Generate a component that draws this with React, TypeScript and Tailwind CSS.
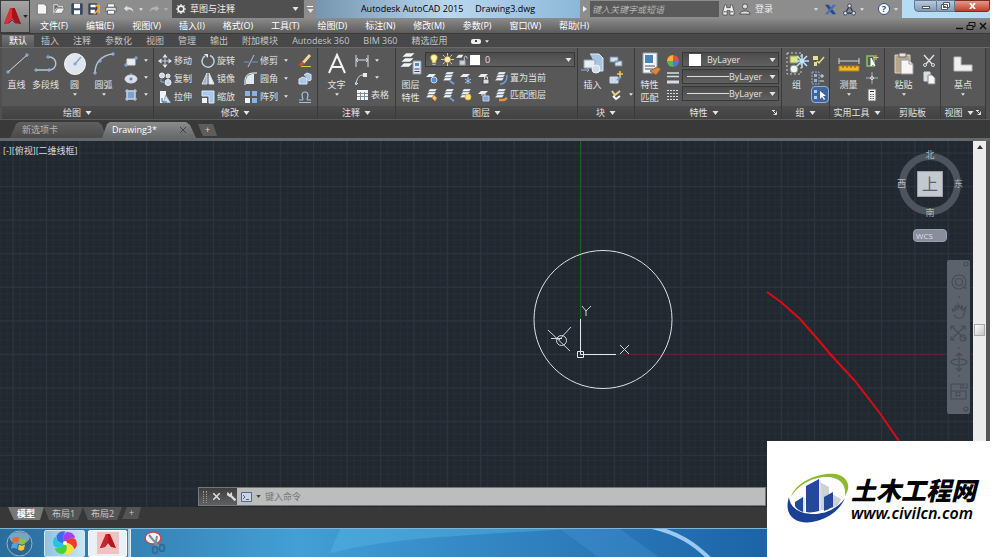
import { ReactNode } from "react";

const menus = [
  "文件(F)",
  "编辑(E)",
  "视图(V)",
  "插入(I)",
  "格式(O)",
  "工具(T)",
  "绘图(D)",
  "标注(N)",
  "修改(M)",
  "参数(P)",
  "窗口(W)",
  "帮助(H)",
];

const ribbonTabs = [
  "默认",
  "插入",
  "注释",
  "参数化",
  "视图",
  "管理",
  "输出",
  "附加模块",
  "Autodesk 360",
  "BIM 360",
  "精选应用",
];

const Caret = ({ small }: { small?: boolean }) => (
  <svg width={small ? 4 : 7} height={small ? 3 : 4} viewBox="0 0 6 4" className="shrink-0" fill="#e4e4e4">
    <path d="M0 0h6L3 4z" />
  </svg>
);

const Icon = ({ children, size = 14 }: { children: ReactNode; size?: number }) => (
  <svg width={size} height={size} viewBox="0 0 14 14" className="shrink-0" fill="none" stroke="#d5dde6" strokeWidth="1">
    {children}
  </svg>
);

const BigIcon = ({ children }: { children: ReactNode }) => (
  <svg width="24" height="24" viewBox="0 0 24 24" className="shrink-0" fill="none" stroke="#d2d8de" strokeWidth="1">
    {children}
  </svg>
);

const Sheets = ({ children }: { children?: ReactNode }) => (
  <Icon>
    <path d="M3 3.500l2-2.500h7L10 3.500zM2 6.500L4 4h7L9 6.500zM1 9.500L3 7h7L8 9.500z" fill="#eef3f8" stroke="#5b6c80" strokeWidth=".3" />
    {children}
  </Icon>
);

const Sheet = ({ children }: { children?: ReactNode }) => (
  <Icon>
    <path d="M1 6l3-3h7L8 6z" fill="#e8eef4" stroke="none" />
    {children}
  </Icon>
);

const Tool = ({ label, caret, children }: { label: string[]; caret?: boolean; children: ReactNode }) => (
  <button className="flex w-[29px] shrink-0 flex-col items-center">
    <BigIcon>{children}</BigIcon>
    <span className="mt-0.5 flex flex-col whitespace-nowrap leading-[13px]">
      {label.map((l) => (
        <span key={l}>{l}</span>
      ))}
    </span>
    {caret && (
      <span className="mt-0.5">
        <Caret small />
      </span>
    )}
  </button>
);

const Small = ({ label, caret, active, children }: { label?: string; caret?: boolean; active?: boolean; children: ReactNode }) => (
  <button
    className={
      active
        ? "flex h-[17px] items-center rounded-sm border border-[#8fb0dd] bg-[#41649a] px-px"
        : "flex h-[17px] items-center gap-0.5 whitespace-nowrap"
    }
  >
    {children}
    {label && <span>{label}</span>}
    {caret && (
      <span className="ml-1">
        <Caret small />
      </span>
    )}
  </button>
);

const Panel = ({ title, caret = true, launcher, className, children }: { title: string; caret?: boolean; launcher?: boolean; className: string; children: ReactNode }) => (
  <section className={`flex shrink-0 flex-col border-r border-[#3a3a3a] ${className}`}>
    <div className="flex h-[58px] bg-[#585858] pt-1">{children}</div>
    <button
      className={
        launcher
          ? "relative flex h-[13px] w-full items-center justify-center gap-1 bg-gradient-to-b from-[#4c4c4c] to-[#424242] pr-2 leading-3"
          : "relative flex h-[13px] w-full items-center justify-center gap-1 bg-gradient-to-b from-[#4c4c4c] to-[#424242] leading-3"
      }
    >
      {title}
      {caret && <Caret />}
      {launcher && (
        <svg className="absolute right-1 top-1" width="5" height="5" viewBox="0 0 5 5" stroke="#ddd" fill="none">
          <path d="M0 .5h3M1 1l3.500 3.500M4.500 1.500v3h-3" />
        </svg>
      )}
    </button>
  </section>
);

const PropSelect = ({ label, swatch }: { label: string; swatch?: boolean }) => (
  <div className="flex h-[15px] items-center border border-[#383838] bg-gradient-to-b from-[#4c4c4c] to-[#606060] pr-0.5">
    {swatch ? <span className="ml-1.5 mr-0.5 size-3 bg-white" /> : <span className="ml-1 h-px w-[42px] bg-[#dcdcdc]" />}
    <select
      aria-label={label}
      className={
        swatch
          ? "min-w-0 flex-1 appearance-none bg-transparent pl-1 leading-3 outline-none"
          : "min-w-0 flex-1 appearance-none bg-transparent leading-3 outline-none"
      }
    >
      <option>ByLayer</option>
    </select>
    <Caret />
  </div>
);

const TitleBar = () => (
  <div className="flex h-[18px] items-stretch bg-[#8d8d8d] text-[#eee]">
    <div className="flex w-[142px] items-center justify-between pl-1.5 pr-1">
      <button aria-label="新建">
        <Icon size={12}>
          <path d="M1.500 1h8l3 3v9h-11z" fill="#f4f4f4" stroke="#666" />
        </Icon>
      </button>
      <button aria-label="打开">
        <Icon size={12}>
          <path d="M1 12V2h4l1 2h5v2H4z" fill="#666" stroke="#eee" />
          <path d="M1.500 12L5 6h8.500L10 12z" fill="#eee" stroke="#555" strokeWidth=".6" />
        </Icon>
      </button>
      <button aria-label="保存">
        <Icon size={12}>
          <path d="M1 1h12v12H1z" fill="#3c4d63" stroke="#2f3b4c" />
          <path d="M3.500 1h7v5h-7zM3.500 8.500h7V13h-7z" fill="#fff" stroke="none" />
        </Icon>
      </button>
      <button aria-label="另存为">
        <Icon size={12}>
          <path d="M1 1h9v12H1z" fill="#3c4d63" stroke="#2f3b4c" />
          <path d="M3 2h6v3H3zM3 8h5v4H3z" fill="#fff" stroke="none" />
          <path d="M9 3h4v9M7 13l6-6" stroke="#f0a840" strokeWidth="2" />
        </Icon>
      </button>
      <button aria-label="打印">
        <Icon size={12}>
          <path d="M3 1h8v4H3z" fill="#fff" stroke="#666" />
          <path d="M1 5h12v5H1z" fill="#e6e6e6" stroke="#4d5866" />
          <path d="M3 8.500h8V13H3z" fill="#fff" stroke="#4d5866" />
        </Icon>
      </button>
      <button aria-label="放弃" className="flex items-center gap-1">
        <Icon size={12}>
          <path d="M5 3L1 6.500 5 10V8c4-1 6 0 7 3 0-4-2-6-7-6z" fill="#ddd" stroke="none" />
        </Icon>
        <Caret small />
      </button>
      <button aria-label="重做" className="flex items-center gap-1 opacity-50">
        <Icon size={12}>
          <path d="M9 3l4 3.500L9 10V8c-4-1-6 0-7 3 0-4 2-6 7-6z" fill="#ddd" stroke="none" />
        </Icon>
        <Caret small />
      </button>
    </div>
    <label className="flex w-[131px] items-center gap-1 bg-[#505050] px-1">
      <Icon size={10}>
        <circle cx="7" cy="7" r="4" stroke="#f2f2f2" strokeWidth="2.200" />
        <path d="M7 0v3M7 11v3M0 7h3M11 7h3M2 2l2 2M10 10l2 2M12 2l-2 2M4 10l-2 2" stroke="#f2f2f2" strokeWidth="1.600" />
      </Icon>
      <select aria-label="工作空间" className="min-w-0 flex-1 appearance-none bg-transparent leading-3 outline-none">
        <option>草图与注释</option>
      </select>
      <Caret />
    </label>
    <button aria-label="自定义" className="flex w-[13px] flex-col items-center justify-center gap-0.5 border-l border-[#555]">
      <span className="h-px w-1.5 bg-white" />
      <Caret />
    </button>
    <h1 className="flex min-w-0 flex-1 items-center justify-center gap-3 whitespace-nowrap bg-gradient-to-r from-[#7595b0] via-[#b9d8ef] to-[#8db7d8] text-black">
      <span>Autodesk AutoCAD 2015</span>
      <span>Drawing3.dwg</span>
    </h1>
    <div className="flex w-[410px] shrink-0 items-center">
      <button aria-label="展开" className="flex w-[10px] justify-center">
        <svg width="4" height="6" viewBox="0 0 4 6" fill="#eee"><path d="M0 0l4 3-4 3z" /></svg>
      </button>
      <input
        aria-label="搜索"
        placeholder="键入关键字或短语"
        className="h-4 w-[129px] bg-[#5a5a5a] px-0.5 italic outline-none placeholder:text-[#b5b5b5]"
      />
      <button aria-label="查找" className="ml-[3px]">
        <Icon size={13}>
          <path d="M3 2h2v3h4V2h2l2 7v4H8.500V8h-3v5H1V9z" fill="#efefef" stroke="#444" strokeWidth=".8" />
          <path d="M2 9.500h3M9 9.500h3" stroke="#444" />
        </Icon>
      </button>
      <button className="ml-1 flex items-center gap-1 whitespace-nowrap">
        <Icon size={12}>
          <circle cx="7" cy="4" r="3" fill="#ddd" stroke="#444" />
          <path d="M1 13c0-5 12-5 12 0z" fill="#ddd" stroke="#444" />
        </Icon>
        登录
      </button>
      <span className="ml-auto"><Caret small /></span>
      <button aria-label="Exchange" className="ml-1.5">
        <Icon size={13}>
          <path d="M1 2h4l8 10H9z" fill="#254a8c" stroke="none" />
          <path d="M13 2H9.500L1 12h3.500z" fill="#4770b5" stroke="none" />
        </Icon>
      </button>
      <button aria-label="A360" className="ml-1.5 flex items-center gap-1">
        <Icon size={13}>
          <path d="M7 3L2.500 11h9z" stroke="#30415c" strokeWidth="1.500" />
          <g fill="#d9e2ee" stroke="#30415c"><circle cx="7" cy="3" r="2" /><circle cx="2.500" cy="11" r="2" /><circle cx="11.500" cy="11" r="2" /></g>
        </Icon>
        <Caret small />
      </button>
      <button aria-label="帮助" className="ml-3.5 mr-1 flex items-center gap-1">
        <span className="flex size-3 items-center justify-center rounded-full border border-[#2c4f86] bg-white font-bold text-[#2c4f86]">?</span>
        <Caret small />
      </button>
      <div className="flex h-full w-[88px] items-start justify-end bg-[#b5dcf5] text-white">
        <button aria-label="最小化" className="flex h-3 w-[23px] items-end justify-center rounded-bl border border-[#66788c] bg-gradient-to-b from-[#b7cbdf] to-[#8199b2] pb-0.5">
          <span className="h-[3px] w-2 border border-[#555] bg-white" />
        </button>
        <button aria-label="还原" className="flex h-3 w-[18px] items-center justify-center border border-l-0 border-[#66788c] bg-gradient-to-b from-[#b7cbdf] to-[#8199b2]">
          <svg width="9" height="8" viewBox="0 0 9 8" fill="#fff" stroke="#556"><path d="M2.500.5h6v5h-6zM.5 2.500h6v5h-6zM2.500 4.500h2v1h-2z" /></svg>
        </button>
        <button aria-label="关闭" className="flex h-3 w-[35px] items-center justify-center rounded-br border border-l-0 border-[#7c2a22] bg-gradient-to-b from-[#e09a8a] to-[#c23a26]">
          <svg width="7" height="6" viewBox="0 0 8 7" stroke="#fff" strokeWidth="2"><path d="M1 0l6 7M7 0L1 7" /></svg>
        </button>
      </div>
    </div>
  </div>
);

const MenuBar = () => (
  <nav className="flex h-[15px] items-center gap-[18px] whitespace-nowrap bg-gradient-to-b from-[#8c8c8c] to-[#5c5c5c] pl-[10px] text-white">
    {menus.map((m) => (
      <button key={m}>{m}</button>
    ))}
    <div className="ml-auto flex gap-1 pr-0.5">
      <svg width="32" height="10" viewBox="0 0 32 10" fill="none" stroke="#111" strokeWidth="1.500">
        <path d="M0 7.500h7M24 2l6 6M30 2l-6 6" />
        <path d="M11 4.500h6v4h-6zM13 4V1.500h6v4h-2" strokeWidth="1" />
      </svg>
    </div>
  </nav>
);

const DrawPanel = () => (
  <Panel title="绘图" className="w-[152px]">
    <Tool label={["直线"]}>
      <path d="M3 20L22 3" />
      <path d="M2 19h2v2H2zM21 2h2v2h-2z" stroke="#8ab4e8" />
    </Tool>
    <Tool label={["多段线"]}>
      <path d="M2 18h13c9 0 9-13 0-13" stroke="#b4c2d4" strokeWidth="1.500" />
      <path d="M1 17h2v2H1zM14 17h2v2h-2zM13 4h2v2h-2z" stroke="#8ab4e8" />
    </Tool>
    <Tool label={["圆"]} caret>
      <circle cx="12" cy="12" r="10.500" fill="#dfe5ec" stroke="#f5f5f5" />
      <path d="M12 12l6-7" stroke="#7da7d8" strokeWidth="1.500" />
      <path d="M11 11h2v2h-2z" stroke="#7da7d8" />
    </Tool>
    <Tool label={["圆弧"]} caret>
      <path d="M3 21C3 10 10 3 21 2" stroke="#b4c2d4" strokeWidth="1.500" />
      <path d="M2 20h2v2H2zM7 8h2v2H7zM20 1h2v2h-2z" stroke="#8ab4e8" />
    </Tool>
    <div className="ml-1.5 flex flex-col">
      <Small caret>
        <Icon><path d="M3 5h8v6H3z" fill="#e6edf5" /><path d="M1 10h2v2H1zM11 3h2v2h-2z" stroke="#8ab4e8" /></Icon>
      </Small>
      <Small caret>
        <Icon><ellipse cx="7" cy="8" rx="6" ry="4" fill="#d4e0ee" /><circle cx="7" cy="8" r="1" stroke="#39699f" /><path d="M6 3h2" stroke="#8ab4e8" /></Icon>
      </Small>
      <Small caret>
        <Icon><path d="M3 3h8v8H3z" fill="#7da1cb" /><path d="M3 1v12M11 1v12M1 3h12M1 11h12" stroke="#b9d4f2" /></Icon>
      </Small>
    </div>
  </Panel>
);

const ModifyPanel = () => (
  <Panel title="修改" className="w-[164px]">
    <div className="grid grid-cols-[43px_43px_54px_16px] pl-1">
      <Small label="移动">
        <Icon><path d="M7 0l2.500 3.500h-5zM7 14l2.500-3.500h-5zM0 7l3.500-2.500v5zM14 7l-3.500-2.500v5z" fill="#dfeaf5" stroke="none" /><path d="M7 4v6M4 7h6" stroke="#b8d2ee" /></Icon>
      </Small>
      <Small label="旋转">
        <Icon><path d="M4 2a6 6 0 1 0 5-.5" strokeWidth="1.500" stroke="#bed0e2" /><path d="M3 0h4v4z" fill="#dfeaf5" stroke="none" /></Icon>
      </Small>
      <Small label="修剪" caret>
        <Icon><path d="M0 8h5M8 8h6" stroke="#6b98cd" /><path d="M10 1L4 13" stroke="#b4c2d4" /></Icon>
      </Small>
      <Small>
        <Icon><path d="M4 8l7-8 2 2-7 8z" fill="#f5d9a0" stroke="none" /><path d="M4 7.500l3 2-3 2H0z" fill="#d64c3d" stroke="none" /><path d="M3 12.500h10" stroke="#f0c040" /></Icon>
      </Small>
      <Small label="复制">
        <Icon><g fill="#c9d8e8" stroke="#eef"><circle cx="4" cy="3.500" r="2.500" /><circle cx="10" cy="4" r="2" /><circle cx="10" cy="10.500" r="3" /></g><path d="M3 7v3h3" stroke="#8ab4e8" /></Icon>
      </Small>
      <Small label="镜像">
        <Icon><path d="M6 1v11H1z" fill="#9fb2c8" /><path d="M8 1v11h5z" fill="#e9f0f7" /></Icon>
      </Small>
      <Small label="圆角" caret>
        <Icon><path d="M2 12V9c0-5 3-7 8-7v10z" fill="#dfe9f4" stroke="none" /><path d="M1 13V9c0-5 3-8 9-8h3" stroke="#fff" /></Icon>
      </Small>
      <Small>
        <Icon><path d="M1 7l4-2 4 2v5H1zM6 3l3-2 4 1.500V8L10 9" fill="#a8c6e8" stroke="#dceafa" /></Icon>
      </Small>
      <Small label="拉伸">
        <Icon><path d="M2 1h6v12H2z" fill="#eef3f9" stroke="none" /><path d="M8 5l5 8H5z" fill="#cfe0f2" stroke="#567" strokeWidth=".5" /><path d="M4 8v4h5" stroke="#39699f" /></Icon>
      </Small>
      <Small label="缩放">
        <Icon><path d="M1 1h12v12H8V6H1z" fill="#a9c9ec" stroke="#d7e7f8" /><path d="M1 8h5v5H1z" fill="#eef3f9" stroke="none" /></Icon>
      </Small>
      <Small label="阵列" caret>
        <Icon><path d="M1 1h5v5H1zM8 1h5v5H8zM8 8h5v5H8z" fill="#86b3e6" stroke="none" /><path d="M1 8h5v5H1z" fill="#f1f5fa" stroke="none" /></Icon>
      </Small>
      <Small>
        <Icon><path d="M1 12.500h12M1 10h3c2 0 0-3 0-5 0-4 6-4 6 0 0 2-2 5 0 5h3" stroke="#9cc0e8" strokeWidth="1.200" /></Icon>
      </Small>
    </div>
  </Panel>
);

const AnnotatePanel = () => (
  <Panel title="注释" className="w-[78px]">
    <div className="flex pl-1">
      <Tool label={["文字"]} caret>
        <path d="M4 21L12 3l8 18M7 15h10" stroke="#f4f4f4" strokeWidth="2" />
      </Tool>
      <div className="ml-1 flex flex-col">
        <Small caret>
          <Icon><path d="M1 1v12M13 1v12M1 6h12M3 4L1 6l2 2M11 4l2 2-2 2" /></Icon>
        </Small>
        <Small caret>
          <Icon><path d="M1 13c1-6 3-9 7-9h3" /><path d="M8 2h4v4H8z" fill="#e4eaf0" stroke="none" /><path d="M0 11l1 3 2-2" /></Icon>
        </Small>
        <Small label="表格">
          <Icon><path d="M2 2h11v10H2z" fill="#f4f4f4" stroke="none" /><path d="M2 5.500h11M2 8.500h11M5.500 4v8M9.500 4v8" stroke="#7d8a98" /></Icon>
        </Small>
      </div>
    </div>
  </Panel>
);

const LayerPanel = () => (
  <Panel title="图层" className="w-[182px]">
    <Tool label={["图层", "特性"]}>
      <path d="M3 5l4-4h9l-4 4zM2 10l4-4h9l-4 4zM1 15l4-4h9l-4 4z" fill="#f1f4f7" stroke="#555" strokeWidth=".5" />
      <path d="M14 9h8v13h-8z" fill="#dfe8f2" stroke="#8799ad" />
      <path d="M16 11h4v3h-4z" fill="#5b87bd" stroke="none" /><path d="M15.500 17h5M15.500 19.500h5" stroke="#446" />
    </Tool>
    <div className="flex flex-1 flex-col pr-0.5">
      <div className="flex h-[17px] items-start">
        <div className="flex h-[15px] flex-1 items-center gap-px border border-[#383838] bg-gradient-to-b from-[#4c4c4c] to-[#606060] px-0.5">
          <Icon size={12}><path d="M7 1c-5 0-4 5-2 7v2h4V8c2-2 3-7-2-7z" fill="#fff2a0" stroke="#e8c860" /><path d="M5 12h4" /></Icon>
          <Icon size={13}><circle cx="7" cy="7" r="3" fill="#fdeeb4" stroke="#f5d67a" /><path d="M7 0v3M7 11v3M0 7h3M11 7h3M2 2l2 2M10 10l2 2M12 2l-2 2M4 10l-2 2" stroke="#f2d488" /></Icon>
          <Icon size={13}><path d="M1 5l3-3h5L7 5z" fill="#eee" stroke="none" /><path d="M5 8h6v5H5z" fill="#c9d2db" stroke="#8795a5" /><path d="M10 8V5c0-2 3-2 3 0v1" /></Icon>
          <span className="ml-px size-2.5 bg-white" />
          <select aria-label="图层" className="ml-1 min-w-0 flex-1 appearance-none bg-transparent leading-3 outline-none">
            <option>0</option>
          </select>
          <Caret />
        </div>
      </div>
      <div className="grid grid-cols-[17px_17px_18px_17px_1fr]">
        <Small><Sheet><circle cx="9" cy="9" r="3" fill="#5d8fd0" stroke="#bcd6f4" /></Sheet></Small>
        <Small><Sheets><path d="M8 10l4 3" stroke="#6fa0dd" strokeWidth="2" /></Sheets></Small>
        <Small><Sheet><path d="M9 6v7M6 8l6 4M12 8l-6 4" stroke="#9cc6f5" /></Sheet></Small>
        <Small><Sheet><path d="M6 8h6v5H6z" fill="#ddd" stroke="#444" /><path d="M7.500 8V6h3v2" /></Sheet></Small>
        <Small label="置为当前"><Sheets><path d="M6 13c5 0 7-4 7-9" stroke="#6fa0dd" strokeWidth="1.500" /></Sheets></Small>
        <Small><Sheets><path d="M9 7l3 3-2 3-3-3z" fill="#f5c87a" stroke="#c98332" /></Sheets></Small>
        <Small><Sheets><path d="M8 10l4 3" stroke="#6fa0dd" strokeWidth="2" /></Sheets></Small>
        <Small><Sheets><circle cx="9" cy="9" r="3" fill="#fbe67b" stroke="#e2b23e" /></Sheets></Small>
        <Small><Sheet><path d="M6 8h6v5H6z" fill="#7aa6dd" stroke="#ccd" /><path d="M5 8V6h3v2" /></Sheet></Small>
        <Small label="匹配图层"><Sheets><path d="M5 12h5l3-2" stroke="#e09444" strokeWidth="2.500" /></Sheets></Small>
      </div>
    </div>
  </Panel>
);

const BlockPanel = () => (
  <Panel title="块" className="w-[57px]">
    <Tool label={["插入"]}>
      <path d="M9 2h9l4 4v13h-5" fill="#a9c5e4" stroke="#dfe9f4" />
      <path d="M3 8h11v8H3z" fill="#e8eef5" stroke="#8fa3b8" />
      <circle cx="15" cy="17" r="4" fill="#cfdcea" stroke="#f2f2f2" />
      <path d="M0 18h8M6 16l2 2-2 2" stroke="#8ab4e8" />
    </Tool>
    <div className="ml-0.5 flex flex-col">
      <Small><Icon><path d="M1 3h8v5H1zM6 7h7v5H6z" fill="#d8e2ed" stroke="#7189a3" /></Icon></Small>
      <Small><Icon><path d="M1 6h8v6H1z" fill="#c7d8ea" /><path d="M8 9l4-3" stroke="#6fa0dd" strokeWidth="2" /><path d="M11 0v6M8 3h6" stroke="#f8c74d" strokeWidth="1.500" /></Icon></Small>
      <Small caret><Icon><path d="M3 3l3 4 5-4" stroke="#e7d18f" strokeWidth="2" /><path d="M4 8l3 3 4-3" stroke="#fff" strokeWidth="2" /></Icon></Small>
    </div>
  </Panel>
);

const PropertyPanel = () => (
  <Panel title="特性" launcher className="w-[147px]">
    <Tool label={["特性", "匹配"]}>
      <path d="M5 1h14v20H5z" fill="#f3f5f7" stroke="#98a5b3" />
      <path d="M7 3h8v8H7z" fill="#4c84b8" stroke="none" />
      <path d="M7 14h10M7 17h8" stroke="#456" />
      <path d="M12 19l7-4 4 2-5 6z" fill="#d28a43" stroke="#9c5d23" />
    </Tool>
    <div className="ml-0.5 mr-0.5 flex flex-col">
      <Small>
        <Icon>
          <g stroke="none"><path d="M7 7L1 7a6 6 0 0 1 6-6z" fill="#f2b33b" /><path d="M7 7V1a6 6 0 0 1 6 6z" fill="#e05046" /><path d="M7 7h6a6 6 0 0 1-6 6z" fill="#5279cf" /><path d="M7 7v6a6 6 0 0 1-6-6z" fill="#55b65a" /></g>
        </Icon>
      </Small>
      <Small><Icon><path d="M1 2h12M1 5.500h12" strokeWidth="1.500" /><path d="M1 11h12" strokeWidth="3" /></Icon></Small>
      <Small><Icon><path d="M1 2.500h12M1 5.500h12M1 8.500h12M1 11.500h12" strokeDasharray="2 1" /></Icon></Small>
    </div>
    <div className="flex flex-1 flex-col gap-0.5 pr-0.5">
      <PropSelect label="对象颜色" swatch />
      <PropSelect label="线宽" />
      <PropSelect label="线型" />
    </div>
  </Panel>
);

const RightPanels = () => (
  <>
    <Panel title="组" className="w-[48px]">
      <Tool label={["组"]}>
        <path d="M2 1h14v21H2z" stroke="#ccc" strokeDasharray="2 2" />
        <path d="M5 4h8v7H5z" fill="#dfe58b" stroke="#8f9650" />
        <circle cx="9" cy="17" r="4" fill="#f3f3f3" stroke="#888" />
        <path d="M17 2v14M10 9h14M12 4l10 10M22 4L12 14" stroke="#bfe4ff" strokeWidth="1.500" />
      </Tool>
      <div className="flex flex-col">
        <Small><Icon><path d="M2 2h5v4H2zM3 8h3v4H3z" fill="#dfe58b" stroke="none" /><path d="M6 7l2 2 5-6" stroke="#f0d48b" strokeWidth="1.500" /></Icon></Small>
        <Small><Icon><path d="M1 1h7v12H1z" stroke="#9ab" strokeDasharray="2 1" /><path d="M3 3h3v3H3zM3 8h3v3H3z" fill="#8ab4e8" stroke="none" /><path d="M9 5h4M11 3v4M9 10h4" /></Icon></Small>
        <Small active><Icon><path d="M1 2h3v3H1zM1 8h3v3H1z" fill="#a9cdf8" stroke="none" /><path d="M7 3v8l2-2 2 3 1-1-2-3h3z" fill="#fff" stroke="none" /></Icon></Small>
      </div>
    </Panel>
    <Panel title="实用工具" className="w-[55px]">
      <div className="flex pl-1">
        <Tool label={["测量"]} caret>
          <path d="M2 6v6M22 6v6M2 9h20" />
          <path d="M2 14h20v5H2z" fill="#f0b62e" stroke="#b57e12" />
          <path d="M6 14v2M10 14v2M14 14v2M18 14v2" stroke="#7d560a" />
        </Tool>
        <div className="ml-0.5 flex flex-col">
          <Small><Icon><path d="M2 2h7v10H2z" stroke="#7fc47a" strokeWidth="1.500" /><path d="M6 4v8l2-2 2 2z" fill="#fff" stroke="#fff" /><path d="M11 1v5M8.500 3.500h5" stroke="#f8c74d" /></Icon></Small>
          <Small><Icon><path d="M7 1v12M1 7h12" stroke="#a9b1ba" /><circle cx="7" cy="7" r="1.500" stroke="#ddd" /></Icon></Small>
          <Small><Icon><path d="M3 1h8v12H3z" fill="#f1f1f1" stroke="#666" /><path d="M5 3.500h4" stroke="#333" /><path d="M5 6.500h4M5 8.500h4M5 10.500h4" stroke="#666" strokeDasharray="1 .5" /></Icon></Small>
        </div>
      </div>
    </Panel>
    <Panel title="剪贴板" caret={false} className="w-[56px]">
      <div className="flex pl-1">
        <Tool label={["粘贴"]} caret>
          <path d="M3 3h15v18H3z" fill="#b7a48a" stroke="#dcd3c5" />
          <path d="M7 1h7v4H7z" fill="#e5e5e5" stroke="#666" />
          <path d="M9 8h8l4 4v10H9z" fill="#f6f6f6" stroke="#999" /><path d="M17 8v4h4" stroke="#999" />
        </Tool>
        <div className="ml-1 flex flex-col">
          <Small><Icon><path d="M2 1l8 9M12 1L4 10" strokeWidth="1.500" /><circle cx="3" cy="11" r="1.500" /><circle cx="11" cy="11" r="1.500" /></Icon></Small>
          <Small><Icon><path d="M2 1h6v9H2z" fill="#ddd" /><path d="M6 4h4l3 3v6H6z" fill="#f6f6f6" stroke="#888" /></Icon></Small>
        </div>
      </div>
    </Panel>
    <Panel title="视图" launcher className="w-[45px]">
      <div className="flex flex-1 justify-center">
        <Tool label={["基点"]} caret>
          <path d="M3 5h7v8h11v6H3z" fill="#f0f0f0" stroke="#bbb" />
        </Tool>
      </div>
    </Panel>
  </>
);

const Ribbon = () => (
  <div className="bg-[#484848] text-[#e2e2e2]">
    <div className="flex h-[14px] items-end whitespace-nowrap border-t border-[#3a3a3a] pl-0.5">
      {ribbonTabs.map((t, i) => (
        <button
          key={t}
          className={
            i === 0
              ? "h-3 bg-gradient-to-b from-[#747474] to-[#585858] px-[7px] leading-3 text-white"
              : "h-3 px-[7px] leading-3 text-[#c4c4c4]"
          }
        >
          {t}
        </button>
      ))}
      <button aria-label="最小化功能区" className="ml-4 flex h-3 items-center gap-1">
        <span className="flex h-[5px] w-2.5 items-center justify-center rounded-xs bg-[#eee]">
          <span className="size-0.5 bg-[#444]" />
        </span>
        <Caret small />
      </button>
    </div>
    <div className="flex overflow-hidden border-t border-[#686868] bg-[#505050] pl-0.5">
      <DrawPanel />
      <ModifyPanel />
      <AnnotatePanel />
      <LayerPanel />
      <BlockPanel />
      <PropertyPanel />
      <RightPanels />
    </div>
  </div>
);

const FileTabs = () => (
  <div className="flex h-[22px] items-end border-b-[3px] border-t border-b-[#65696a] border-t-[#5c5c5c] bg-[#393939] pl-[10px]">
    <button className="h-4 w-[96px] bg-gradient-to-b from-[#5f5f5f] to-[#4a4a4a] pl-3 text-left text-[#b5b5b5] [clip-path:polygon(0_100%,6px_2px,9px_0,88px_0,92px_3px,100%_100%)]">
      新选项卡
    </button>
    <div className="-ml-1 flex h-4 w-[94px] items-center justify-between bg-gradient-to-b from-[#8b8b8b] to-[#65696a] pl-[10px] pr-2 text-white [clip-path:polygon(0_100%,5px_2px,8px_0,84px_0,88px_3px,100%_100%)]">
      <button>Drawing3*</button>
      <button aria-label="关闭" className="mr-0.5">
        <svg width="6" height="6" viewBox="0 0 6 6" stroke="#444"><path d="M0 0l6 6M6 0L0 6" /></svg>
      </button>
    </div>
    <button aria-label="新图形" className="ml-0.5 mb-0.5 flex h-3 w-[19px] items-center justify-center bg-[#5c5c5c] text-[#ddd] [clip-path:polygon(0_0,80%_0,100%_100%,25%_100%)]">
      +
    </button>
  </div>
);

const ViewCube = () => (
  <div className="absolute right-2 top-2 flex flex-col items-center">
    <div className="relative flex size-[70px] items-center justify-center">
      <span className="absolute size-[62px] rounded-full border-[7px] border-[#4d545e]" />
      <span className="absolute top-0 text-[#b3b7bd]">北</span>
      <span className="absolute bottom-0 text-[#b3b7bd]">南</span>
      <span className="absolute left-0.5 text-[#b3b7bd]">西</span>
      <span className="absolute right-0.5 text-[#b3b7bd]">东</span>
      <button className="relative size-[26px] border border-[#9aa1a9] bg-[#c3c9cf] text-base leading-5 text-[#5a6270]">上</button>
    </div>
    <button className="mt-2.5 h-[13px] w-[34px] rounded border border-[#9ba0ad] bg-[#8a8e9c] pl-0.5 text-left text-[8px] leading-[11px] text-[#dde]">
      WCS
    </button>
  </div>
);

const NavBar = () => (
  <div className="absolute right-[3px] top-[119px] h-[154px] w-[23px] rounded-xs bg-[#5c626c]">
    <svg width="23" height="154" viewBox="0 0 23 154" fill="none" stroke="#454b57" strokeWidth="1.200">
      <circle cx="19" cy="4" r="2" />
      <circle cx="12" cy="22" r="7" /><circle cx="12" cy="22" r="3.500" /><path d="M17 28h3" />
      <path d="M12 36v2" />
      <path d="M7 52c-4-4 0-4 2-1l-1-6 3 4v-5l3 5 1-4 1 5 3-3-2 7c-1 5-6 6-10 1" />
      <path d="M4 66l14 13M18 66L4 80M4 70v-4h4M14 66h4v4M4 76v4h4" /><circle cx="16" cy="78" r="3" />
      <path d="M12 87v2" />
      <ellipse cx="12" cy="102" rx="8" ry="3" /><path d="M12 93v18M9 96l3-3 3 3M9 108l3 3 3-3" />
      <path d="M12 115v2" />
      <path d="M4 124h10v5M4 124v15h15v-8h-15M16 124h4v4h-4z" /><circle cx="11" cy="134" r="2" />
      <circle cx="19" cy="149" r="2" />
    </svg>
  </div>
);

const Canvas = () => (
  <main className="flex flex-1">
    <div className="relative flex-1 overflow-hidden bg-[#212830]">
      <svg className="absolute inset-0 size-full" fill="none">
        <defs>
          <pattern id="minor" x="12.800" y="11.800" width="6.680" height="6.680" patternUnits="userSpaceOnUse">
            <path d="M.5 0v6.680M0 .5h6.680" stroke="#252d37" />
          </pattern>
          <pattern id="major" x="12.500" y="11.500" width="33.400" height="33.600" patternUnits="userSpaceOnUse">
            <path d="M.5 0v33.600M0 .5h33.400" stroke="#2d3640" />
          </pattern>
        </defs>
        <rect width="100%" height="100%" fill="url(#minor)" />
        <rect width="100%" height="100%" fill="url(#major)" />
        <path d="M580.500 0v178" stroke="#1f5f2b" />
        <path d="M617 213.500h400" stroke="#55262c" />
        <circle cx="603" cy="178.500" r="69" stroke="#dfe1e3" />
        <path d="M580.500 178v35.500H616M577.500 210.500h6v6h-6z" stroke="#e8e8e8" />
        <path d="M582 165l4 5 5-5M586 170v5M620 204l9 9M629 204l-9 9" stroke="#cfd2d5" />
        <path d="M548 189l22 21M571 186l-12 13M551 197.500h11" stroke="#d5d8da" />
        <circle cx="561.500" cy="199.500" r="5" stroke="#d5d8da" />
        <path d="M767 151l14 10 19 17 15 17 16 19 24 26 24 31 20 29" stroke="#dc0a12" strokeWidth="2" />
      </svg>
      <span className="relative ml-[3px] mt-1 block text-[#d5dae0]">[-][俯视][二维线框]</span>
      <ViewCube />
      <NavBar />
      <div className="absolute bottom-px left-[198px] right-[207px] flex h-[19px] items-stretch border border-[#777]">
        <div className="flex w-[38px] shrink-0 items-center gap-1.5 bg-gradient-to-b from-[#3f3f3f] to-[#606060] pl-1">
          <span className="h-3 w-1 shrink-0 border-x border-dotted border-[#999]" />
          <svg className="shrink-0" width="7" height="7" viewBox="0 0 7 7" stroke="#ddd" strokeWidth="1.500"><path d="M0 0l7 7M7 0L0 7" /></svg>
          <Icon size={11}><path d="M6 6l6 6" stroke="#ddd" strokeWidth="3" /><path d="M2 1L1 5l4 3 3-3-1-4-2 3z" fill="#ddd" stroke="none" /></Icon>
        </div>
        <label className="flex min-w-0 flex-1 items-center gap-1 bg-[#bcbebd] pl-1">
          <svg width="11" height="10" viewBox="0 0 11 10" fill="#cbd5e2" stroke="#566b8a"><path d="M.5.5h10v9H.5zM2 3l2 2-2 2M5 7.500h3" /></svg>
          <svg width="5" height="3" viewBox="0 0 6 4" fill="#444"><path d="M0 0h6L3 4z" /></svg>
          <input aria-label="命令行" placeholder="键入命令" className="min-w-0 flex-1 bg-transparent outline-none placeholder:text-[#777]" />
        </label>
      </div>
    </div>
    <div className="relative w-[13px] bg-[#ececec]">
      <svg className="absolute left-1 top-1" width="6" height="4" viewBox="0 0 6 4" fill="#333"><path d="M0 4h6L3 0z" /></svg>
      <span className="absolute left-px top-1/2 h-3 w-[11px] border border-[#aaa] bg-gradient-to-br from-white to-[#c4c4c4]" />
    </div>
    <div className="w-1 bg-[#555]" />
  </main>
);

const LayoutTabs = () => (
  <div className="flex h-[21px] items-start bg-[#383838] pl-2 leading-3 text-[#c9c9c9]">
    <button className="h-[13px] w-[36px] bg-[#777] font-bold text-white [clip-path:polygon(0_0,100%_0,32px_100%,6px_100%)]">模型</button>
    <button className="h-[13px] w-[39px] bg-[#545454] [clip-path:polygon(0_0,100%_0,34px_100%,5px_100%)]">布局1</button>
    <button className="h-[13px] w-[39px] bg-[#545454] [clip-path:polygon(0_0,100%_0,34px_100%,5px_100%)]">布局2</button>
    <button aria-label="新布局" className="h-[12px] w-[19px] bg-[#545454] [clip-path:polygon(5px_0,100%_0,16px_100%,0_100%)]">+</button>
  </div>
);

const Taskbar = () => (
  <footer className="relative flex h-[29px] items-center overflow-hidden border-t border-[#7fb4d4] bg-gradient-to-r from-[#2a6d9c] via-[#439fd6] via-30% to-[#1a60a6] to-80%">
    <svg className="absolute inset-0 size-full" fill="none">
      <path d="M330 24c60-14 100-16 240-24H340z" fill="#5ab8e6" opacity=".4" />
      <path d="M560 0l40 29h60L620 0z" fill="#4f9ad8" opacity=".3" />
      <path d="M652-2c26 6 42 16 60 34" stroke="#9cc9f2" strokeWidth="4" />
    </svg>
    <button aria-label="开始" className="relative ml-[6px]">
      <svg width="27" height="27" viewBox="0 0 27 27">
        <circle cx="13.500" cy="13.500" r="12.500" fill="#2e6691" stroke="#8fb8d2" />
        <ellipse cx="13.500" cy="8" rx="10" ry="6" fill="#9dbfd4" opacity=".7" />
        <path d="M7 8c2-1.500 4-1.500 6 0l-1 5c-2-1.500-4-1.500-6 0z" fill="#e8692c" />
        <path d="M14 8.500c2 1.500 4 1.500 6 0l-1 5c-2 1.500-4 1.500-6 0z" fill="#8cc63f" />
        <path d="M6 14c2-1.500 4-1.500 6 0l-1 5c-2-1.500-4-1.500-6 0z" fill="#4aa6e8" />
        <path d="M13 14.500c2 1.500 4 1.500 6 0l-1 5c-2 1.500-4 1.500-6 0z" fill="#fbc92d" />
      </svg>
    </button>
    <button aria-label="浏览器" className="relative ml-[11px] flex h-[27px] w-[41px] items-center justify-center rounded-xs border border-[#cfe6f4] bg-gradient-to-r from-[#8fc3e0] to-[#c9e6f3]">
      <svg width="24" height="24" viewBox="-12 -12 24 24">
        <path d="M0 0C-3-4-2-9 2-11 7-11 10-8 10-5 6-6 2-4 0 0" fill="#a53df0" />
        <path d="M0 0C-3-4-2-9 2-11 7-11 10-8 10-5 6-6 2-4 0 0" fill="#f0392f" transform="rotate(60)" />
        <path d="M0 0C-3-4-2-9 2-11 7-11 10-8 10-5 6-6 2-4 0 0" fill="#fbe13a" transform="rotate(120)" />
        <path d="M0 0C-3-4-2-9 2-11 7-11 10-8 10-5 6-6 2-4 0 0" fill="#42d23f" transform="rotate(180)" />
        <path d="M0 0C-3-4-2-9 2-11 7-11 10-8 10-5 6-6 2-4 0 0" fill="#27c4dd" transform="rotate(240)" />
        <path d="M0 0C-3-4-2-9 2-11 7-11 10-8 10-5 6-6 2-4 0 0" fill="#3d68f0" transform="rotate(300)" />
        <circle r="2" fill="#fff" />
      </svg>
    </button>
    <button aria-label="AutoCAD" className="relative ml-[3px] flex h-[27px] w-[39px] items-center justify-center rounded-xs border border-white bg-[#e9f1f6]">
      <svg width="24" height="24" viewBox="0 0 24 24">
        <path d="M1 1h22v22H1z" fill="#f1c1c2" />
        <path d="M10 3h4l6 14-5-1-3-4-3 4-5 1z" fill="#b3161f" />
        <path d="M10 3h2v9l-3 4-5 1z" fill="#c9242e" />
      </svg>
    </button>
    <span className="ml-px h-full w-[3px] border-r border-white/60 bg-[#a6d2ea]" />
    <button aria-label="截图工具" className="relative ml-3">
      <svg width="24" height="24" viewBox="0 0 24 24" fill="none">
        <ellipse cx="10" cy="7" rx="8" ry="6" fill="#edf3f7" stroke="#c8434c" strokeWidth="1.500" />
        <path d="M6 4l10 12M14 5l-2 11" stroke="#7d8d9c" strokeWidth="2" />
        <ellipse cx="19" cy="17" rx="2.500" ry="3.500" stroke="#2e6898" strokeWidth="1.500" />
        <ellipse cx="12" cy="19" rx="2.500" ry="3.500" stroke="#2e6898" strokeWidth="1.500" />
      </svg>
    </button>
  </footer>
);

const SiteBadge = () => (
  <div className="absolute bottom-0 right-0 flex h-[116px] w-[233px] items-center bg-white pl-5 text-black">
    <svg width="64" height="54" viewBox="0 0 64 54" className="shrink-0">
      <path d="M4 25C10 5 50-6 59 8c4 6 2 11-1 16 1-10-3-18-17-19C26 4 10 14 4 25z" fill="#8dba2b" />
      <path d="M2 25c-7 22 12 30 31 23 12-4 21-12 25-22-6 9-18 16-31 16C13 42 3 36 2 25z" fill="#1a3f95" />
      <path d="M31 9l11 6v23H31zM45 22l9 5-3 6-6 3z" fill="#cfd0d2" />
      <path d="M8 30l8-5v15c-4-1-7-4-8-6zM19 14l13-7v32c-4 1-9 2-13 1zM37 25l9-5v15l-9 4z" fill="#23489c" />
      <path d="M16 25l2 1v14h-2zM32 7l2 2v30h-2z" fill="#dfe2e8" />
    </svg>
    <div className="whitespace-nowrap italic">
      <p className="font-['Noto_Sans_CJK_SC',sans-serif] text-[25px] font-black leading-7">土木工程网</p>
      <p className="font-['Noto_Sans',sans-serif] text-base font-semibold leading-5">www.civilcn.com</p>
    </div>
  </div>
);

export default function App() {
  return (
    <div className="relative flex min-h-screen flex-col bg-white font-['Open_Sans','Noto_Sans_CJK_SC',sans-serif] text-[9px] leading-3">
      <div className="flex flex-1 flex-col pr-[10px]">
        <header className="flex">
          <button aria-label="应用程序" className="flex w-[30px] items-center border border-[#3c3c3c] bg-gradient-to-b from-[#a5a5a5] to-[#7b7b7b] pl-px">
            <svg className="shrink-0" width="21" height="20" viewBox="0 0 21 22">
              <path d="M8 1h5l7 18-6-1-4-6-4 6-5 1z" fill="#a5131b" />
              <path d="M8 1h2v11l-4 6-5 1z" fill="#dd2d35" />
              <path d="M6 18l4-4 4 4" stroke="#6d0a10" fill="none" />
            </svg>
            <svg className="shrink-0" width="5" height="3" viewBox="0 0 6 4" fill="#222"><path d="M0 0h6L3 4z" /></svg>
          </button>
          <div className="min-w-0 flex-1">
            <TitleBar />
            <MenuBar />
          </div>
        </header>
        <Ribbon />
        <FileTabs />
        <Canvas />
        <LayoutTabs />
        <Taskbar />
      </div>
      <SiteBadge />
    </div>
  );
}
